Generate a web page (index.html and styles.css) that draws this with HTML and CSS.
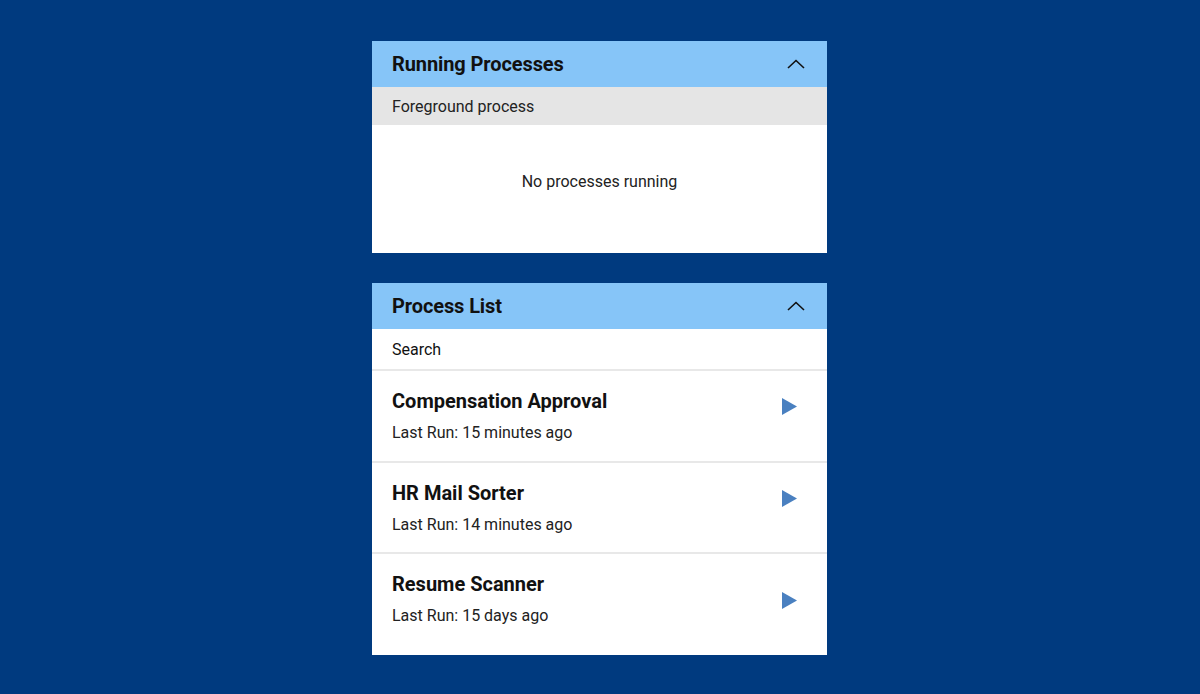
FILE: index.html
```html
<!DOCTYPE html>
<html lang="en">
<head>
    <meta charset="UTF-8">
    <meta name="viewport" content="width=device-width, initial-scale=1.0">
    <title>Processes</title>
    <link rel="stylesheet" href="styles.css">
</head>
<body>
    <div class="container">
        <section class="panel">
            <header class="panel-header">
                <h2>Running Processes</h2>
                <svg class="chevron" width="18" height="10" viewBox="0 0 18 10"><polyline points="1,9 9,1.5 17,9" fill="none" stroke="#111" stroke-width="1.6"/></svg>
            </header>
            <div class="subbar">Foreground process</div>
            <div class="empty">No processes running</div>
        </section>

        <section class="panel">
            <header class="panel-header">
                <h2>Process List</h2>
                <svg class="chevron" width="18" height="10" viewBox="0 0 18 10"><polyline points="1,9 9,1.5 17,9" fill="none" stroke="#111" stroke-width="1.6"/></svg>
            </header>
            <div class="search">Search</div>
            <ul class="process-list">
                <li class="process first">
                    <div class="info">
                        <div class="name">Compensation Approval</div>
                        <div class="last-run">Last Run: 15 minutes ago</div>
                    </div>
                    <svg class="play" width="15" height="17" viewBox="0 0 15 17"><polygon points="0,0 15,8.5 0,17" fill="#4a80c0"/></svg>
                </li>
                <li class="process">
                    <div class="info">
                        <div class="name">HR Mail Sorter</div>
                        <div class="last-run">Last Run: 14 minutes ago</div>
                    </div>
                    <svg class="play" width="15" height="17" viewBox="0 0 15 17"><polygon points="0,0 15,8.5 0,17" fill="#4a80c0"/></svg>
                </li>
                <li class="process last">
                    <div class="info">
                        <div class="name">Resume Scanner</div>
                        <div class="last-run">Last Run: 15 days ago</div>
                    </div>
                    <svg class="play" width="15" height="17" viewBox="0 0 15 17"><polygon points="0,0 15,8.5 0,17" fill="#4a80c0"/></svg>
                </li>
            </ul>
        </section>
    </div>
</body>
</html>
```

FILE: styles.css
```css
body {
    font-family: Roboto, "Liberation Sans", sans-serif;
    background-color: #003a7f;
    margin: 0;
    padding: 0;
    color: #111;
}
.container {
    width: 455px;
    margin-left: calc(50% - 228px);
    padding-top: 41px;
    display: flex;
    flex-direction: column;
    gap: 30px;
}
.panel {
    background-color: white;
}
.panel-header {
    background-color: #86c5f8;
    height: 46px;
    padding: 0 22px 0 20px;
    display: flex;
    align-items: center;
    justify-content: space-between;
}
.panel-header h2 {
    margin: 0;
    font-size: 20px;
    font-weight: 700;
    letter-spacing: -0.1px;
}
.chevron {
    display: block;
}
.subbar {
    background-color: #e5e5e5;
    height: 38px;
    padding: 0 20px;
    display: flex;
    align-items: center;
    font-size: 16px;
    color: #222;
}
.empty {
    height: 112px;
    padding-bottom: 16px;
    display: flex;
    align-items: center;
    justify-content: center;
    font-size: 16px;
    color: #222;
}
.search {
    height: 40px;
    padding: 0 20px;
    display: flex;
    align-items: center;
    font-size: 16px;
    color: #111;
    border-bottom: 2px solid #e8e8e8;
}
.process-list {
    list-style: none;
    margin: 0;
    padding: 0;
}
.process {
    height: 89px;
    padding: 0 30px 0 20px;
    display: flex;
    justify-content: space-between;
    border-bottom: 2px solid #e8e8e8;
}
.process.first {
    height: 90px;
}
.process.last {
    height: 101px;
    border-bottom: none;
}
.info {
    padding-top: 18px;
}
.name {
    font-size: 20px;
    font-weight: 700;
    line-height: 24px;
}
.last-run {
    margin-top: 10px;
    font-size: 16px;
    line-height: 20px;
    color: #222;
}
.play {
    margin-top: 27px;
}
.process.last .play {
    margin-top: 38px;
}
```
